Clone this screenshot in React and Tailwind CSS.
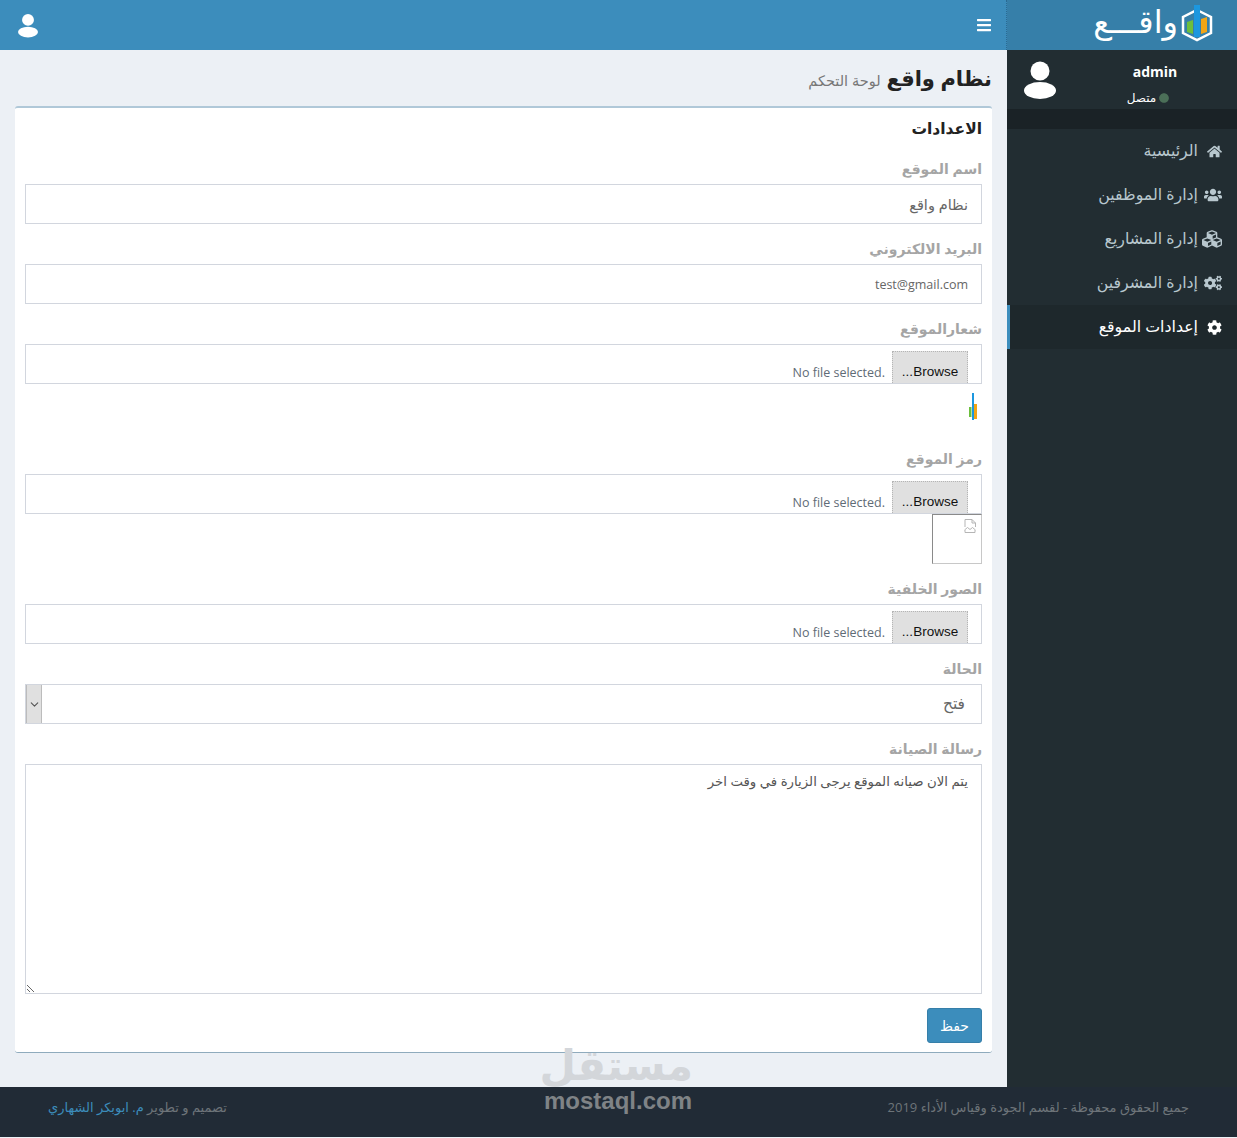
import React from 'react';
import { FaHome, FaUsers, FaCubes, FaCogs, FaCog, FaBars, FaCircle } from 'react-icons/fa';
import { LuChevronDown } from 'react-icons/lu';

const font = "font-['Open_Sans','DejaVu_Sans',sans-serif]";

const Avatar = ({ className }) => (
  <svg viewBox="0 0 32 38" className={className} fill="white">
    <circle cx="16" cy="10" r="9.5" />
    <ellipse cx="16" cy="29.5" rx="16" ry="8.5" />
  </svg>
);

const Logo = () => (
  <svg viewBox="0 0 32 36" className="w-[32px] h-[36px] shrink-0 overflow-visible">
    <path d="M16 3 L30 10 V26 L16 33 L2 26 V10 Z" fill="none" stroke="white" strokeWidth="2.5" />
    <path d="M6 15 L12 13 V27 L6 25 Z" fill="#6cbf3c" />
    <path d="M20 12 L26 10 V25 L20 27 Z" fill="#f2a516" />
    <rect x="13" y="-2" width="6" height="32" fill="#1c97df" />
  </svg>
);

const menu = [
  { label: 'الرئيسية', icon: FaHome, size: 'text-[15px]' },
  { label: 'إدارة الموظفين', icon: FaUsers, size: 'text-[18px]' },
  { label: 'إدارة المشاريع', icon: FaCubes, size: 'text-[20px]' },
  { label: 'إدارة المشرفين', icon: FaCogs, size: 'text-[18px]' },
  { label: 'إعدادات الموقع', icon: FaCog, size: 'text-[15px]', active: true },
];

const Label = ({ children }) => (
  <div className="h-[20px] mb-[5px] text-[14px] leading-[20px] font-bold text-[#a5a5a5]">{children}</div>
);

const FileInput = () => (
  <div className="h-[40px] border border-[#d2d6de] flex items-end pr-[13px] overflow-hidden">
    <div className="w-[76px] h-[32px] bg-[#e0e0e0] border-t border-x border-[#b5b5b5] border-dotted text-[13.5px] leading-[40px] text-center text-[#111] font-['Liberation_Sans',sans-serif]">
      Browse...
    </div>
    <span dir="ltr" className="mr-[7px] mb-[2px] text-[12.5px] leading-[16px] text-[#5f6b76]">No file selected.</span>
  </div>
);

export default function App() {
  return (
    <div dir="rtl" className={`w-[1237px] h-[1138px] relative overflow-hidden bg-[#ecf0f5] flex flex-col ${font}`}>
      <div className="flex h-[1087px] shrink-0">
        {/* Sidebar */}
        <aside className="w-[230px] bg-[#222d32] shrink-0">
          <div className="h-[50px] bg-[#367fa9] flex items-center gap-[3px] pr-[24px]">
            <Logo />
            <span className="text-[32px] leading-[40px] text-white -mt-[8px] whitespace-nowrap">واقـــع</span>
          </div>
          <div className="h-[59px] flex items-center justify-between pl-[17px]">
            <div className="w-[164px] text-center pt-[8px]">
              <div className="text-[14px] leading-[20px] font-bold text-white">admin</div>
              <div className="mt-[9px] flex items-center justify-center gap-[3px] pr-[14px] text-[12px] leading-[14px] text-white">
                <FaCircle className="text-[#4b6f58] text-[10px]" />
                <span>متصل</span>
              </div>
            </div>
            <Avatar className="w-[32px] h-[38px]" />
          </div>
          <div className="h-[20px] bg-[#1a2226]" />
          <nav>
            {menu.map(({ label, icon: Icon, size, active }) => (
              <div
                key={label}
                className={`h-[44px] flex items-center pr-[15px] ${active ? 'bg-[#1e282c] text-white border-l-[3px] border-[#3c8dbc]' : 'text-[#b8c7ce]'}`}
              >
                <span className="w-[16px] flex justify-start shrink-0">
                  <Icon className={`${size} shrink-0`} />
                </span>
                <span className="mr-[8px] text-[15.8px]">{label}</span>
              </div>
            ))}
          </nav>
        </aside>

        {/* Main column */}
        <main className="flex-1 min-w-0">
          <header className="h-[50px] bg-[#3c8dbc] border-r border-dotted border-[#2b6a92] flex items-center justify-between pr-[14px] pl-[18px]">
            <FaBars className="text-white text-[16px]" />
            <Avatar className="w-[20px] h-[25px]" />
          </header>
          <div className="px-[15px]">
            <div className="h-[56px] pt-[2px] flex items-center gap-[6px]">
              <h1 className="text-[21px] font-bold text-[#222]">نظام واقع</h1>
              <span className="text-[14.5px] text-[#777] mt-[3px]">لوحة التحكم</span>
            </div>
            <section className="h-[947px] bg-white border-t-2 border-b border-t-[#b0c8d8] border-b-[#8fabbd] rounded-[3px] px-[10px]">
              <h3 className="h-[42px] flex items-center text-[15.5px] font-bold text-[#222] mb-[9px]">الاعدادات</h3>
              <Label>اسم الموقع</Label>
              <input readOnly value="نظام واقع" className="w-full h-[40px] border border-[#d2d6de] px-[13px] text-[14.5px] text-[#666] mb-[15px] outline-none" />
              <Label>البريد الالكتروني</Label>
              <input readOnly value="test@gmail.com" className="w-full h-[40px] border border-[#d2d6de] px-[13px] text-[12.5px] text-[#666] mb-[15px] outline-none" />
              <Label>شعارالموقع</Label>
              <FileInput />
              <div className="h-[50px] pt-[9px] pr-[5px]">
                <svg viewBox="0 0 9 27" className="block w-[9px] h-[27px]">
                  <rect x="1" y="14" width="2.5" height="10" fill="#6cbf3c" />
                  <rect x="6" y="11" width="3" height="15" fill="#f2a516" />
                  <rect x="4" y="0" width="2" height="27" fill="#1c97df" />
                </svg>
              </div>
              <div className="h-[15px]" />
              <Label>رمز الموقع</Label>
              <FileInput />
              <div className="w-[50px] h-[50px] border border-t-[#8a8a8a] border-r-[#c8c8c8] border-b-[#c8c8c8] border-l-[#8a8a8a] pr-[5px] pt-[4px]">
                <svg viewBox="0 0 12 14" className="block w-[12px] h-[14px]" fill="none" stroke="#b5b5b5" strokeWidth="1">
                  <path d="M1 8 V0.5 H8 L11.5 4 V8 M8 0.5 V4 H11.5" />
                  <path d="M0.5 11 L3.5 8.5 L6 10.5 L8.5 8.5 L11.5 11 M1 11 V13.5 H11 V11" />
                </svg>
              </div>
              <div className="h-[15px]" />
              <Label>الصور الخلفية</Label>
              <FileInput />
              <div className="h-[15px]" />
              <Label>الحالة</Label>
              <div className="h-[40px] border border-[#d2d6de] flex items-center justify-between pr-[16px]">
                <span className="text-[15.5px] text-[#666]">فتح</span>
                <span className="w-[16px] h-[38px] bg-[#e0e0e0] border-x border-[#bcbcbc] flex items-center justify-center text-[#555]">
                  <LuChevronDown className="text-[13px]" />
                </span>
              </div>
              <div className="h-[15px]" />
              <Label>رسالة الصيانة</Label>
              <textarea
                readOnly
                value="يتم الان صيانه الموقع يرجى الزيارة في وقت اخر"
                className="block w-full h-[230px] border border-[#d2d6de] px-[13px] py-[7px] text-[13.3px] text-[#555] outline-none"
              />
              <button className="block mt-[14px] w-[55px] h-[35px] bg-[#3c8dbc] border border-[#367fa9] rounded-[3px] text-white text-[14px]">حفظ</button>
            </section>
          </div>
        </main>
      </div>

      {/* Footer */}
      <footer className="h-[50px] bg-[#212b36] flex items-center justify-between px-[48px] pb-[8px] text-[13px] text-[#6d7479]">
        <span>جميع الحقوق محفوظة - لقسم الجودة وقياس الأداء 2019</span>
        <span>
          تصميم و تطوير <span className="text-[#3c8dbc]">م. ابوبكر الشهاري</span>
        </span>
      </footer>

      {/* Watermark */}
      <div className="absolute left-[543px] top-[1040px] w-[150px] text-center font-bold pointer-events-none">
        <div className="text-[42px] leading-[48px] text-[#d3d6da]">مستقل</div>
        <div dir="ltr" className="text-[24px] leading-[26px] text-[#7f8386] font-['Liberation_Sans',sans-serif]">mostaql.com</div>
      </div>
    </div>
  );
}
